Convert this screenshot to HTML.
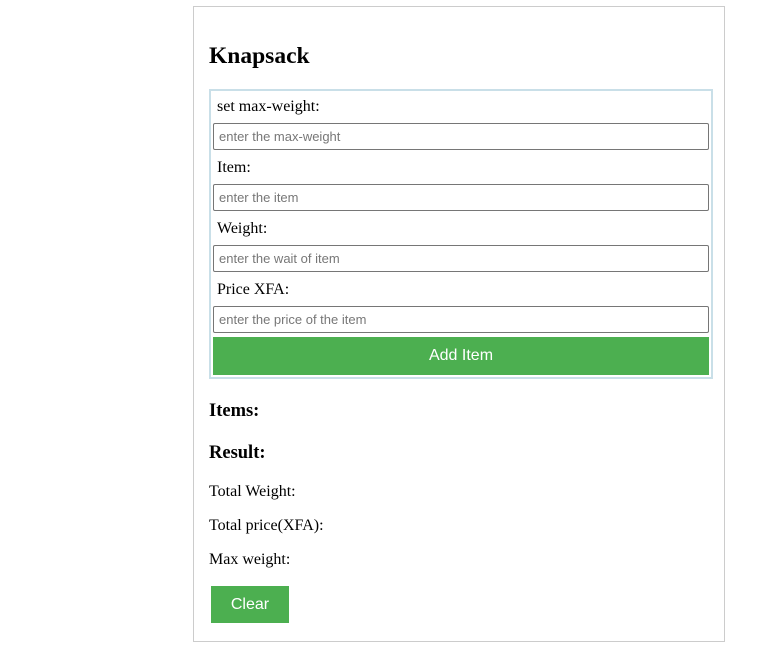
<!DOCTYPE html>
<html><head><style>
body{margin:0;width:772px;height:666px;background:#fff;font-family:"Liberation Serif",serif;position:relative;overflow:hidden}
.a{position:absolute}
.box{left:193px;top:6px;width:530px;height:634px;border:1px solid #ccc}
.form{left:209px;top:89px;width:500px;height:286px;border:2px solid #c9dfe8}
.lbl{left:217px;font-size:16px;color:#000;line-height:18px}
.inp{left:213px;width:494px;height:25px;border:1px solid #767676;border-radius:2px;font-family:"Liberation Sans",sans-serif;font-size:13px;color:#777;line-height:25px;text-indent:5px;box-sizing:content-box}
.btn{background:#4caf50;color:#fff;font-family:"Liberation Sans",sans-serif;font-size:16px;text-align:center}
h{position:absolute;font-weight:bold}
.t{font-size:16px;left:209px;line-height:18px}
</style></head><body>
<div class="a box"></div>
<h style="left:209px;top:43px;font-size:23.5px">Knapsack</h>
<div class="a form"></div>
<div class="a lbl" style="top:98px">set max-weight:</div>
<div class="a inp" style="top:123px">enter the max-weight</div>
<div class="a lbl" style="top:159px">Item:</div>
<div class="a inp" style="top:184px">enter the item</div>
<div class="a lbl" style="top:220px">Weight:</div>
<div class="a inp" style="top:245px">enter the wait of item</div>
<div class="a lbl" style="top:281px">Price XFA:</div>
<div class="a inp" style="top:306px">enter the price of the item</div>
<div class="a btn" style="left:213px;top:337px;width:496px;height:38px;line-height:38px">Add Item</div>
<h style="left:209px;top:401px;font-size:18.5px">Items:</h>
<h style="left:209px;top:443px;font-size:18.5px">Result:</h>
<div class="a t" style="top:483px">Total Weight:</div>
<div class="a t" style="top:517px">Total price(XFA):</div>
<div class="a t" style="top:551px">Max weight:</div>
<div class="a btn" style="left:211px;top:586px;width:78px;height:37px;line-height:37px">Clear</div>
</body></html>
